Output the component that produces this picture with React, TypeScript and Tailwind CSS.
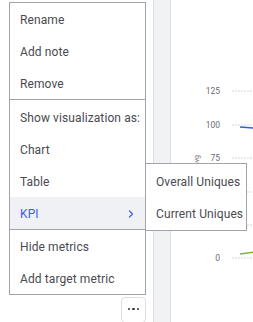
import React from 'react';
import { ChevronRight } from 'lucide-react';

const font = { fontFamily: 'Roboto, "Liberation Sans", sans-serif' };

function Item({ label, active, arrow }: { label: string; active?: boolean; arrow?: boolean }) {
  return (
    <div
      className={`h-8 flex items-center justify-between pl-[10px] pr-2 pt-px text-[12px] tracking-[0.1px] whitespace-nowrap ${
        active ? 'bg-[#f0f1f4] text-[#3f5ee8]' : 'text-[#4a4a52]'
      }`}
    >
      <span>{label}</span>
      {arrow && <ChevronRight className="w-3 h-3 text-[#3f5ee8]" strokeWidth={2.5} />}
    </div>
  );
}

function Chart() {
  const ticks = [
    { v: '125', y: 91 },
    { v: '100', y: 125 },
    { v: '75', y: 158 },
    { v: '50', y: 192 },
    { v: '25', y: 225 },
    { v: '0', y: 258 },
  ];
  return (
    <svg className="flex-1" height="322">
      <text x="28" y="155" fontSize="7" fill="#777" textAnchor="end" transform="rotate(-90 28 155)" style={font}>
        Uniques avg
      </text>
      {ticks.map((t) => (
        <g key={t.v}>
          <text x="49" y={t.y + 3} fontSize="8.5" fill="#6b6b73" textAnchor="end" style={font}>
            {t.v}
          </text>
          <line x1="61" x2="83" y1={t.y} y2={t.y} stroke="#d6d6da" strokeDasharray="2 1" />
        </g>
      ))}
      <path d="M69 127 L83 128" stroke="#2f5fe0" strokeWidth="1.5" fill="none" />
      <path d="M69 254 L83 252" stroke="#7cb82f" strokeWidth="1.5" fill="none" />
    </svg>
  );
}

export default function App() {
  return (
    <div className="relative w-[253px] h-[322px] bg-white overflow-hidden" style={font}>
      <div className="flex h-full">
        <div className="w-[153px]" />
        <div className="w-[18px] h-full bg-[#f1f2f4] border-x border-[#dcdde1]" />
        <Chart />
      </div>

      <div className="absolute left-[9px] top-[2px] w-[137px] bg-white border border-[#a3a3aa]">
        <div>
          <Item label="Rename" />
          <Item label="Add note" />
          <Item label="Remove" />
        </div>
        <div className="border-t border-[#a3a3aa] pt-px">
          <Item label="Show visualization as:" />
          <Item label="Chart" />
          <Item label="Table" />
          <Item label="KPI" active arrow />
        </div>
        <div className="border-t border-[#a3a3aa]">
          <Item label="Hide metrics" />
          <Item label="Add target metric" />
        </div>
      </div>

      <div className="absolute left-[145px] top-[163px] w-[102px] bg-white border border-[#a3a3aa] py-px">
        <Item label="Overall Uniques" />
        <Item label="Current Uniques" />
      </div>

      <div className="absolute left-[121px] top-[297px] w-[25px] h-[26px] rounded-[4px] border border-[#dedee2] bg-white flex items-center justify-center gap-[2px] pb-[2px]">
        <span className="w-[2.5px] h-[2.5px] rounded-full bg-[#333]" />
        <span className="w-[2.5px] h-[2.5px] rounded-full bg-[#333]" />
        <span className="w-[2.5px] h-[2.5px] rounded-full bg-[#333]" />
      </div>
    </div>
  );
}
